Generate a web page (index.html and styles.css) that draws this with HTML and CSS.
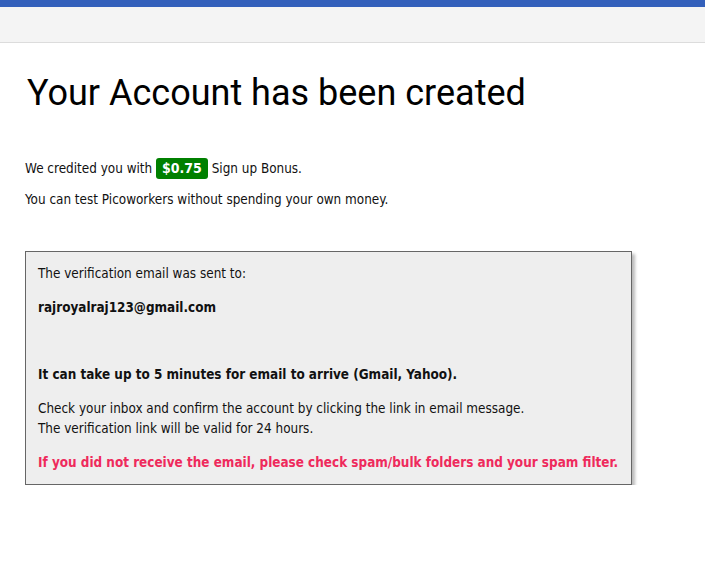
FILE: index.html
```html
<!DOCTYPE html>
<html>
<head>
<meta charset="utf-8">
<link rel="stylesheet" href="styles.css">
</head>
<body>
<div class="topbar"></div>
<div class="header"></div>
<main class="content">
  <h1 class="title">Your Account has been created</h1>
  <p class="line first">We credited you with <span class="badge">$0.75</span> Sign up Bonus.</p>
  <p class="line">You can test Picoworkers without spending your own money.</p>
  <div class="box">
    <p class="bline">The verification email was sent to:</p>
    <p class="bline bold email">rajroyalraj123@gmail.com</p>
    <p class="bline bold wait">It can take up to 5 minutes for email to arrive (Gmail, Yahoo).</p>
    <p class="bline check">Check your inbox and confirm the account by clicking the link in email message.<br>The verification link will be valid for 24 hours.</p>
    <p class="bline bold warn">If you did not receive the email, please check spam/bulk folders and your spam filter.</p>
  </div>
</main>
</body>
</html>
```
FILE: styles.css
```css
html, body {
  margin: 0;
  padding: 0;
  background: #fff;
}
body {
  font-family: "DejaVu Sans Condensed", "Liberation Sans", sans-serif;
  font-size: 13.4px;
  color: #111;
}
.topbar {
  height: 7px;
  background: #3360bb;
}
.header {
  height: 35px;
  background: #f4f4f4;
  border-bottom: 1px solid #dcdcdc;
}
.content {
  padding: 0 25px;
}
.title {
  margin: 28px 0 0 2px;
  font-family: Roboto, sans-serif;
  font-weight: 400;
  font-size: 36px;
  line-height: 44px;
  color: #000;
}
.line {
  margin: 0;
  line-height: 20px;
}
.line.first {
  margin-top: 43px;
  margin-bottom: 11px;
}
.badge {
  display: inline-block;
  background: #008000;
  color: #fff;
  font-weight: bold;
  font-size: 14px;
  line-height: 21px;
  padding: 0 6px;
  border-radius: 3px;
}
.box {
  margin-top: 41px;
  width: 581px;
  background: #eeeeee;
  border: 1px solid #666;
  box-shadow: 3px 3px 3px #bbb;
  padding: 12px 12px 11px;
}
.bline {
  margin: 0;
  line-height: 20px;
}
.bold {
  font-weight: bold;
}
.email {
  margin-top: 14px;
}
.wait {
  margin-top: 47px;
}
.check {
  margin-top: 14px;
}
.warn {
  margin-top: 14px;
  color: #ee2a5c;
}
```
